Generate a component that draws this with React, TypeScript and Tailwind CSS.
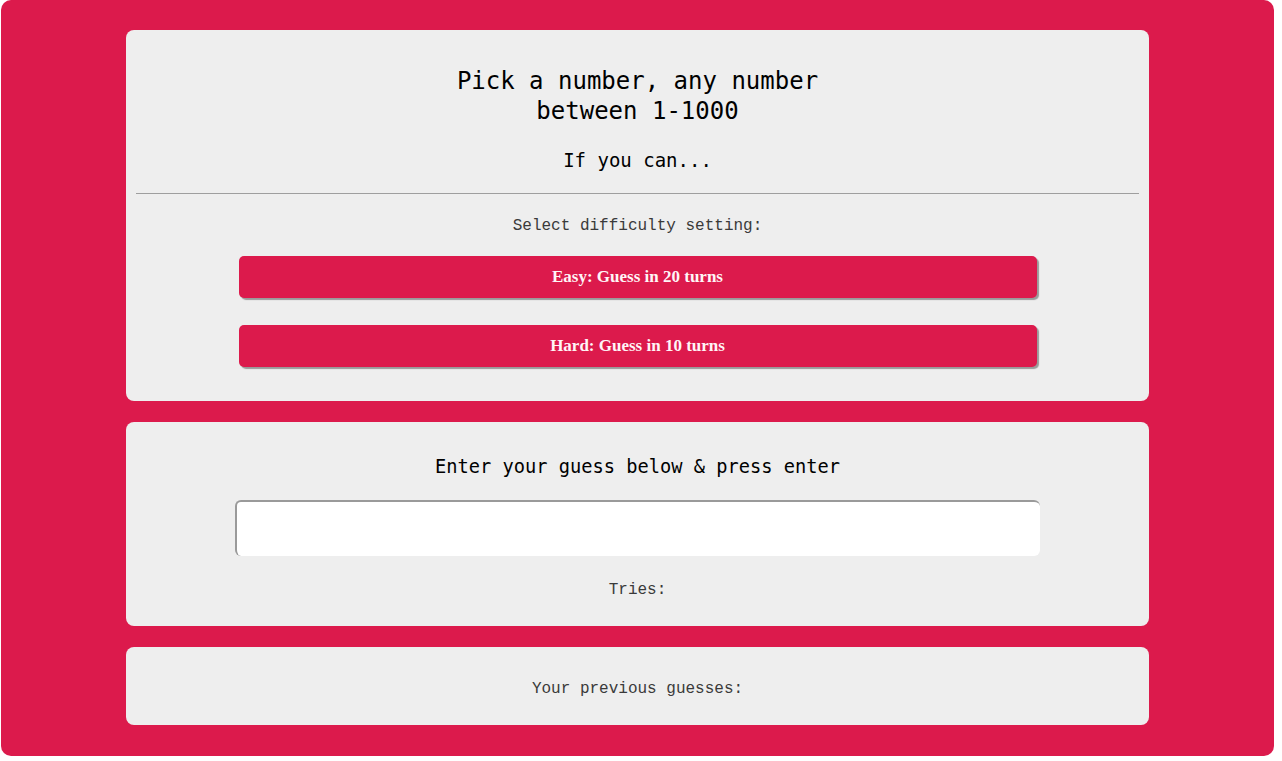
const mono = "font-['DejaVu_Sans_Mono',monospace]";
const thin = "font-['Liberation_Mono',monospace] text-[#3a3a3a]";

function DifficultyButton({ label }: { label: string }) {
  return (
    <button
      type="button"
      className="mx-auto flex h-[42px] w-[798px] items-center justify-center rounded-[5px] bg-[#dc1a4c] font-['Liberation_Serif',serif] text-[17px] font-bold text-[#fff5f7] shadow-[2px_2px_1px_#9a9a9a]"
    >
      {label}
    </button>
  );
}

export default function App() {
  return (
    <div className="min-h-[761px] bg-white">
      <div className="ml-px flex h-[756px] w-[1273px] flex-col items-center gap-[21px] rounded-[10px] bg-[#dc1a4c] pt-[30px]">
        <section className="w-[1023px] rounded-lg bg-[#eeeeee] px-[10px] pb-[34px] pt-[36px] text-center">
          <h1 className={`${mono} text-[24px] leading-[30px] text-black`}>
            Pick a number, any number
            <br />
            between 1-1000
          </h1>
          <h2 className={`${mono} mt-[22px] text-[19px] leading-[24px] text-black`}>If you can...</h2>
          <hr className="mt-[21px] border-0 border-t border-[#9e9e9e]" />
          <p className={`${thin} mt-[20px] text-[16px] leading-[24px]`}>Select difficulty setting:</p>
          <div className="mt-[18px] flex flex-col gap-[27px]">
            <DifficultyButton label="Easy: Guess in 20 turns" />
            <DifficultyButton label="Hard: Guess in 10 turns" />
          </div>
        </section>

        <section className="w-[1023px] rounded-lg bg-[#eeeeee] px-[10px] pb-[24px] pt-[32px] text-center">
          <h3 className={`${mono} text-[18.7px] leading-[26px] text-black`}>Enter your guess below &amp; press enter</h3>
          <input
            type="text"
            className="mx-auto mt-[20px] block h-[56px] w-[805px] rounded-[6px] border-l-2 border-t-2 border-[#9a9a9a] bg-white outline-none"
          />
          <p className={`${thin} mt-[22px] text-[16px] leading-[24px]`}>Tries:</p>
        </section>

        <section className="w-[1023px] rounded-lg bg-[#eeeeee] px-[10px] pb-[24px] pt-[30px] text-center">
          <p className={`${thin} text-[16px] leading-[24px]`}>Your previous guesses:</p>
        </section>
      </div>
    </div>
  );
}
